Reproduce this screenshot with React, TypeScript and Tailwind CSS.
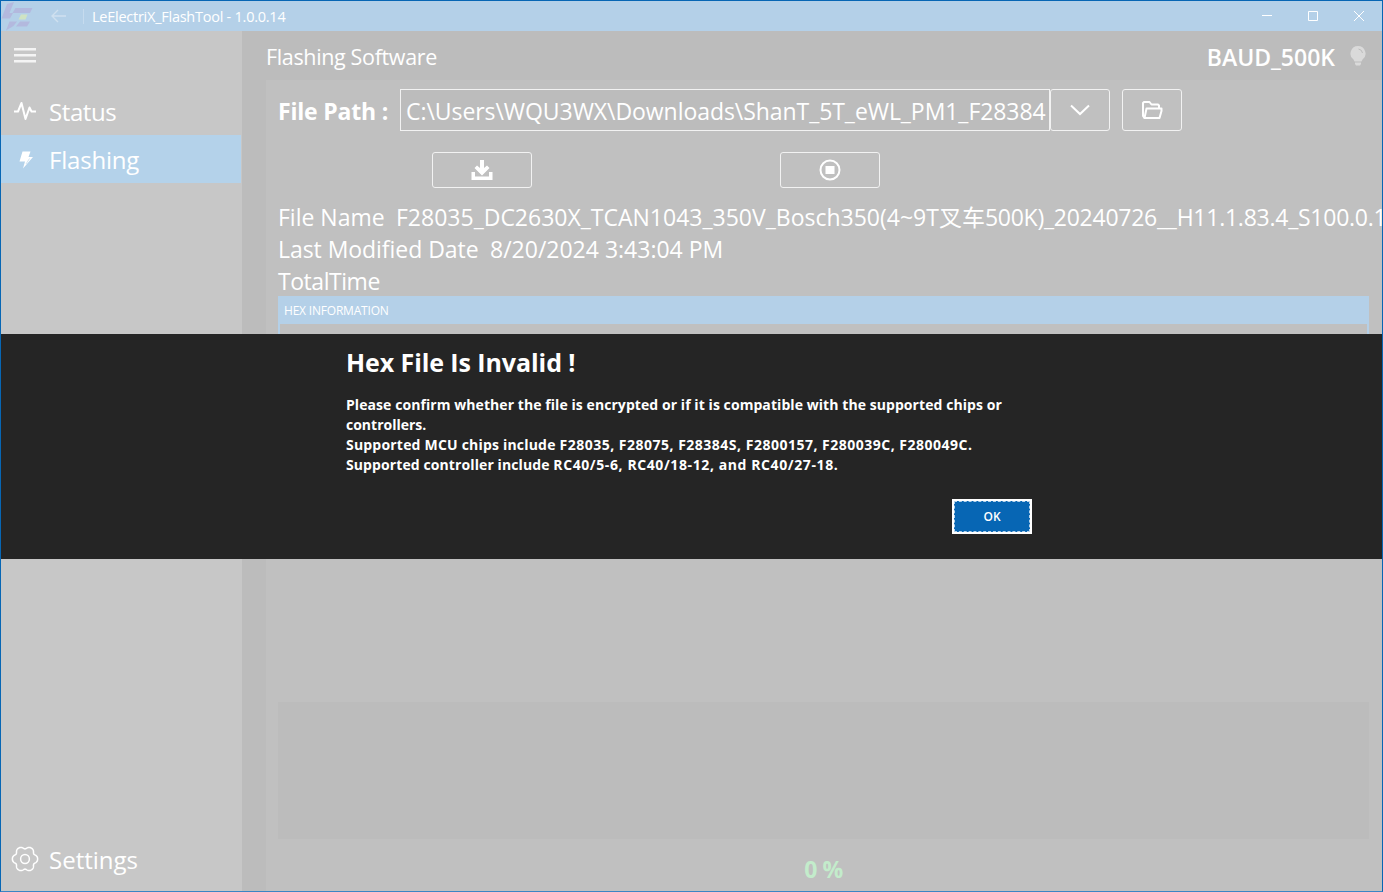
import type { ReactNode } from "react";

const gearPath = (() => {
  const points: string[] = [];
  for (let i = 0; i < 120; i++) {
    const a = (i / 120) * Math.PI * 2;
    const r = 11.6 + 1.25 * Math.cos(6 * a) - 0.25 * Math.cos(12 * a);
    points.push(`${(14 + r * Math.cos(a)).toFixed(2)} ${(14 + r * Math.sin(a)).toFixed(2)}`);
  }
  return `M${points.join("L")}Z`;
})();

function Logo() {
  return (
    <svg width="34" height="30" viewBox="0 0 34 30" className="shrink-0">
      <g fill="#b3b9de">
        <path d="M6 3L13 1L8.500 12H12L9 17.500H.5Z" />
        <path d="M14.500 7H31.500L29 12H11.500Z" />
        <path d="M19 20.500H29L26 25.500H15Z" />
        <path d="M8.500 20.500H16L12.500 25L5 29.500Z" />
      </g>
      <path d="M20 13.500H26.500L24.500 18.500H17.500Z" fill="#cfe3c3" />
    </svg>
  );
}

function TitleBar() {
  return (
    <header className="flex h-[30px] shrink-0 items-center bg-[#b4d0e8]">
      <Logo />
      <svg width="16" height="14" viewBox="0 0 16 14" className="ml-4 shrink-0" fill="none" stroke="#cfe0ef" strokeWidth="1.4">
        <path d="M15 7H1M7 1L1 7L7 13" />
      </svg>
      <div className="ml-4 h-[15px] w-px bg-[#c6dbee]" />
      <span className="ml-2 pt-px text-[14.5px] tracking-[-0.25px] whitespace-pre">LeElectriX_FlashTool - 1.0.0.14</span>
      <div className="ml-auto flex h-full text-white">
        <svg width="46" height="30" viewBox="0 0 46 30" stroke="currentColor" fill="none">
          <path d="M18 14.500H28" />
        </svg>
        <svg width="46" height="30" viewBox="0 0 46 30" stroke="currentColor" fill="none">
          <path d="M18.500 10.500H27.500V19.500H18.500Z" />
        </svg>
        <svg width="46" height="30" viewBox="0 0 46 30" stroke="currentColor" fill="none">
          <path d="M18 10L28 20M28 10L18 20" />
        </svg>
      </div>
    </header>
  );
}

function NavItem({ icon, children, className = "" }: { icon: ReactNode; children: ReactNode; className?: string }) {
  return (
    <div className={`mr-px flex h-12 items-center ${className}`}>
      <div className="flex w-12 justify-center">{icon}</div>
      <span className="text-2xl whitespace-pre">{children}</span>
    </div>
  );
}

function Sidebar() {
  return (
    <nav className="flex w-[241px] shrink-0 flex-col bg-[#c7c7c7]">
      <div className="flex h-14 flex-col gap-[3px] pt-[17px] pl-[13px]">
        <div className="h-[3px] w-[22px] border-b border-[#dedede] bg-[#f4f4f4]" />
        <div className="h-[3px] w-[22px] border-b border-[#dedede] bg-[#f4f4f4]" />
        <div className="h-[3px] w-[22px] border-b border-[#dedede] bg-[#f4f4f4]" />
      </div>
      <NavItem
        className="pt-px tracking-[-0.4px]"
        icon={
          <svg width="24" height="20" viewBox="0 0 24 20" fill="none" stroke="white" strokeWidth="2" strokeLinejoin="round" className="-mt-0.5">
            <path d="M1 10.500H5L8.500 2L12.500 18L16.500 6.500L18.500 10.500H23" />
          </svg>
        }
      >
        Status
      </NavItem>
      <NavItem
        className="bg-[#b4d2ea] pt-px tracking-[-0.2px]"
        icon={
          <svg width="16" height="18" viewBox="0 0 16 18" className="ml-0.5">
            <path d="M4.500 .5H12.500L10.500 6H15L5 17.500L7 10.500H1.500Z" fill="white" />
            <path d="M11.500 7.500L8 13" stroke="#d4e6f4" strokeWidth="1" fill="none" />
          </svg>
        }
      >
        Flashing
      </NavItem>
      <NavItem
        className="mt-auto mb-[7px]"
        icon={
          <svg width="28" height="28" viewBox="0 0 28 28" fill="none" stroke="white" strokeWidth="1.5" className="-mt-[3px]">
            <path d={gearPath} />
            <circle cx="14" cy="14" r="4.400" />
          </svg>
        }
      >
        Settings
      </NavItem>
    </nav>
  );
}

function IconButton({ className, children }: { className: string; children: ReactNode }) {
  return (
    <button className={`flex shrink-0 items-center justify-center rounded-[3px] border border-[#f2f2f2] ${className}`}>
      {children}
    </button>
  );
}

function FilePathRow() {
  return (
    <div className="flex h-[42px] shrink-0">
      <span className="w-[122px] shrink-0 pt-px text-[23px] leading-[42px] font-bold tracking-[-0.2px] whitespace-pre">File Path :</span>
      <div className="w-[650px] shrink-0 overflow-hidden border border-[#f2f2f2] bg-[#bcbcbc] pt-px pl-[5px] text-[23px] leading-10 tracking-[-0.06px] whitespace-pre">
        C:\Users\WQU3WX\Downloads\ShanT_5T_eWL_PM1_F28384
      </div>
      <IconButton className="w-[60px]">
        <svg width="20" height="12" viewBox="0 0 20 12" fill="none" stroke="white" strokeWidth="2">
          <path d="M1 1.500L10 10L19 1.500" />
        </svg>
      </IconButton>
      <IconButton className="ml-3 w-[60px]">
        <svg width="22" height="20" viewBox="0 0 22 20" fill="none" stroke="white" strokeWidth="2" strokeLinejoin="round">
          <path d="M3.500 18L2 16V3L3 2H8.500L10.500 4.500H17L18 5.500V8" />
          <path d="M3.500 18L5.500 8.500H20.500V11L18.500 18Z" />
        </svg>
      </IconButton>
    </div>
  );
}

function Content() {
  return (
    <main className="flex min-w-0 flex-1 flex-col overflow-hidden bg-[#c0c0c0] pt-[9px] pl-3">
      <FilePathRow />
      <div className="mt-[21px] flex h-9 shrink-0 pl-[154px]">
        <IconButton className="w-[100px]">
          <svg width="22" height="20" viewBox="0 0 22 20" fill="white">
            <path d="M9 0H13V8L16 5.500L18.500 8L11 15.500L3.500 8L6 5.500L9 8Z" />
            <path d="M.5 12H4V16.500H18V12H21.500V20H.5Z" />
          </svg>
        </IconButton>
        <IconButton className="ml-[248px] w-[100px]">
          <svg width="22" height="22" viewBox="0 0 22 22">
            <circle cx="11" cy="11" r="9.500" fill="none" stroke="white" strokeWidth="2" />
            <rect x="6.500" y="7" width="9" height="8" fill="white" />
          </svg>
        </IconButton>
      </div>
      <div className="mt-[13px] flex h-[95px] shrink-0 flex-col text-[23px] leading-8 whitespace-pre">
        <div className="flex h-8 gap-3">
          <span className="w-[106px] shrink-0">File Name</span>
          <span>
            F28035_DC2630X_TCAN1043_350V_Bosch350(4~9T叉车
            <span className="tracking-[-0.25px]">500K)_20240726__H11.1.83.4_S100.0.1</span>
          </span>
        </div>
        <div className="flex h-8">
          <span className="w-[212px] tracking-[-0.05px]">Last Modified Date</span>
          <span>8/20/2024 3:43:04 PM</span>
        </div>
        <span className="tracking-[-0.45px]">TotalTime</span>
      </div>
      <section className="mr-[13px] h-[250px] shrink-0 border-2 border-t-0 border-[#b4d0e8]">
        <h2 className="h-7 bg-[#b4d0e8] pt-px pl-1 text-xs leading-7 tracking-[-0.2px]">HEX INFORMATION</h2>
      </section>
      <div className="mt-[156px] mr-[13px] h-[137px] shrink-0 bg-[#bcbcbc]" />
      <div className="mt-[14px] mr-[13px] text-center text-[23px] leading-8 font-bold tracking-[-0.5px] text-[#c3eccb]">0 %</div>
    </main>
  );
}

function InvalidFileDialog() {
  return (
    <div role="alertdialog" className="absolute inset-x-0 top-[333px] flex h-[225px] flex-col bg-[#252525] pt-3 pr-[350px] pl-[345px]">
      <h1 className="text-[25px] leading-8 font-bold tracking-[-0.08px]">Hex File Is Invalid !</h1>
      <div className="mt-[17px] text-sm leading-5 font-bold whitespace-pre">
        <p className="tracking-[0.07px]">Please confirm whether the file is encrypted or if it is compatible with the supported chips or</p>
        <p>controllers.</p>
        <p className="tracking-[0.5px]">
          <span className="tracking-[0.2px]">Supported MCU chips include </span>F28035, F28075, F28384S, F2800157, F280039C, F280049C.
        </p>
        <p className="tracking-[0.6px]">
          <span className="tracking-[0.1px]">Supported controller include </span>RC40/5-6, RC40/18-12, and RC40/27-18.
        </p>
      </div>
      <button className="mt-6 h-[35px] w-20 self-end border-2 border-white bg-[#0766b4] p-0 text-xs font-semibold">
        <span className="flex h-full items-center justify-center border border-dashed border-[#b5d3ec]">OK</span>
      </button>
    </div>
  );
}

export default function App() {
  return (
    <div className="relative flex h-[892px] w-[1383px] flex-col overflow-hidden border border-[#0766b4] border-b-[#3a85c4] bg-[#bcbcbc] font-['Open_Sans','Noto_Sans_CJK_SC',sans-serif] text-white">
      <TitleBar />
      <div className="flex min-h-0 flex-1">
        <Sidebar />
        <div className="flex min-w-0 flex-1 flex-col pl-6">
          <div className="flex h-[49px] shrink-0 items-center pt-[3px] pr-4">
            <span className="text-[21.5px] tracking-[-0.35px]">Flashing Software</span>
            <span className="ml-auto text-[23px] font-semibold">BAUD_500K</span>
            <svg width="16" height="20" viewBox="0 0 16 20" className="-mt-0.5 ml-[15px]">
              <path d="M8 0A7.500 7.500 0 0 0 3.500 13.500L4.500 15.500H11.500L12.500 13.500A7.500 7.500 0 0 0 8 0Z" fill="#dadada" />
              <path d="M5 16.500H11V18L10 19.500H6L5 18Z" fill="#dadada" />
              <path d="M8.500 3Q12 3.500 12.500 7" stroke="#bcbcbc" fill="none" />
            </svg>
          </div>
          <Content />
        </div>
      </div>
      <InvalidFileDialog />
    </div>
  );
}
